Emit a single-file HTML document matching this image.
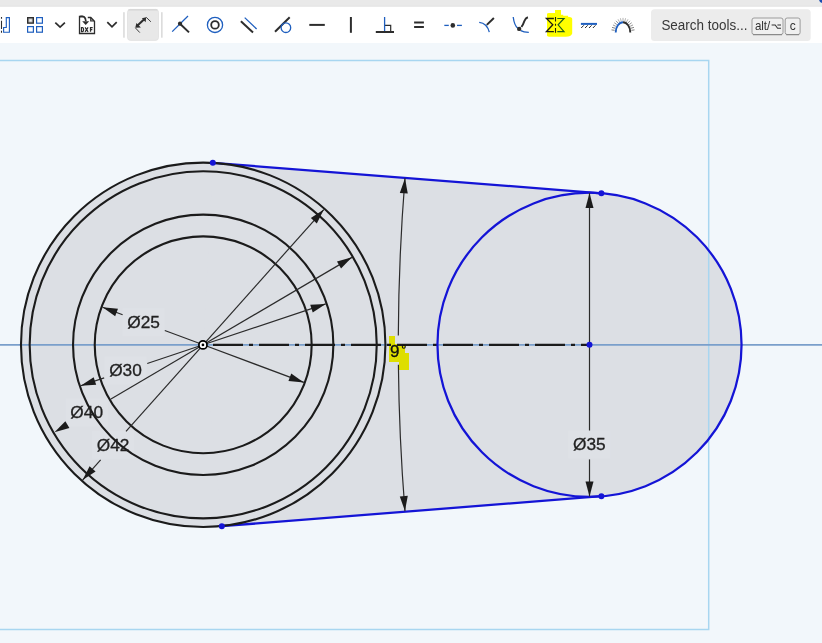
<!DOCTYPE html>
<html><head><meta charset="utf-8"><style>
html,body{margin:0;padding:0;width:822px;height:643px;overflow:hidden;background:#f2f7fb;}
svg{display:block;will-change:transform;}
</style></head><body>
<svg width="822" height="643" viewBox="0 0 822 643">
<rect x="0" y="0" width="822" height="643" fill="#f2f7fb"/>
<circle cx="203.20" cy="344.80" r="182.22" fill="#dcdfe4"/>
<circle cx="589.50" cy="344.80" r="152.05" fill="#dcdfe4"/>
<polygon points="212.80,162.80 601.40,193.30 601.40,496.20 221.80,526.20 203.20,344.80" fill="#dcdfe4"/>
<rect x="122.4" y="308.2" width="42" height="28" fill="#dee1e6"/>
<rect x="104.5" y="356.4" width="42" height="28" fill="#dee1e6"/>
<rect x="65.7" y="398.4" width="42" height="28" fill="#dee1e6"/>
<rect x="92.1" y="430.8" width="42" height="28" fill="#dee1e6"/>
<rect x="568.3" y="430.6" width="42" height="28" fill="#dee1e6"/>
<path d="M0 60.5 H708.7 V629.4 H0" fill="none" stroke="#a8d6f0" stroke-width="1.5"/>
<line x1="0" y1="344.80" x2="822" y2="344.80" stroke="#7a9fcb" stroke-width="1.7"/>
<polygon points="389,336 395,336 395,344 405,344 405,353 409,353 409,370 399,370 399,362 389,362" fill="#dede00"/>
<line x1="213" y1="344.80" x2="589.5" y2="344.80" stroke="#1b1b1b" stroke-width="2.3" stroke-dasharray="30 6 4 6"/>
<line x1="212.80" y1="162.80" x2="601.40" y2="193.30" stroke="#1414d6" stroke-width="2.25"/>
<line x1="221.80" y1="526.20" x2="601.40" y2="496.20" stroke="#1414d6" stroke-width="2.25"/>
<circle cx="203.20" cy="344.80" r="182.22" fill="none" stroke="#1b1b1b" stroke-width="2.1"/>
<circle cx="203.20" cy="344.80" r="173.54" fill="none" stroke="#1b1b1b" stroke-width="2.1"/>
<circle cx="203.20" cy="344.80" r="130.16" fill="none" stroke="#1b1b1b" stroke-width="2.1"/>
<circle cx="203.20" cy="344.80" r="108.46" fill="none" stroke="#1b1b1b" stroke-width="2.1"/>
<circle cx="589.50" cy="344.80" r="152.05" fill="none" stroke="#1414d6" stroke-width="2.25"/>
<line x1="203.20" y1="344.80" x2="303.88" y2="382.38" stroke="#2b2b2b" stroke-width="1.2"/>
<polygon points="303.88,382.38 288.43,380.88 291.22,373.39" fill="#1b1b1b"/>
<line x1="203.20" y1="344.80" x2="164.79" y2="330.46" stroke="#2b2b2b" stroke-width="1.2"/>
<line x1="122.63" y1="314.73" x2="102.52" y2="307.22" stroke="#2b2b2b" stroke-width="1.2"/>
<polygon points="102.52,307.22 117.97,308.72 115.18,316.21" fill="#1b1b1b"/>
<line x1="203.20" y1="344.80" x2="325.71" y2="303.90" stroke="#2b2b2b" stroke-width="1.2"/>
<polygon points="325.71,303.90 312.75,312.44 310.21,304.85" fill="#1b1b1b"/>
<line x1="203.20" y1="344.80" x2="147.24" y2="363.48" stroke="#2b2b2b" stroke-width="1.2"/>
<line x1="104.17" y1="377.86" x2="80.69" y2="385.70" stroke="#2b2b2b" stroke-width="1.2"/>
<polygon points="80.69,385.70 93.65,377.16 96.19,384.75" fill="#1b1b1b"/>
<line x1="203.20" y1="344.80" x2="351.95" y2="257.37" stroke="#2b2b2b" stroke-width="1.2"/>
<polygon points="351.95,257.37 341.04,268.42 336.99,261.52" fill="#1b1b1b"/>
<line x1="203.20" y1="344.80" x2="110.96" y2="399.02" stroke="#2b2b2b" stroke-width="1.2"/>
<polygon points="54.45,432.23 65.36,421.18 69.41,428.08" fill="#1b1b1b"/>
<line x1="203.20" y1="344.80" x2="323.81" y2="209.55" stroke="#2b2b2b" stroke-width="1.2"/>
<polygon points="323.81,209.55 316.81,223.41 310.84,218.08" fill="#1b1b1b"/>
<line x1="203.20" y1="344.80" x2="125.99" y2="431.38" stroke="#2b2b2b" stroke-width="1.2"/>
<line x1="100.64" y1="459.81" x2="82.59" y2="480.05" stroke="#2b2b2b" stroke-width="1.2"/>
<polygon points="82.59,480.05 89.59,466.19 95.56,471.52" fill="#1b1b1b"/>
<line x1="589.50" y1="193" x2="589.50" y2="430.5" stroke="#2b2b2b" stroke-width="1.2"/>
<line x1="589.50" y1="459.4" x2="589.50" y2="496.5" stroke="#2b2b2b" stroke-width="1.2"/>
<polygon points="589.50,193.00 593.50,208.00 585.50,208.00" fill="#1b1b1b"/>
<polygon points="589.50,496.60 585.50,481.60 593.50,481.60" fill="#1b1b1b"/>
<path d="M405.00 178.30 A2071.70 2071.70 0 0 0 398.32 335.50" fill="none" stroke="#2b2b2b" stroke-width="1.2"/>
<path d="M398.40 364.70 A2071.70 2071.70 0 0 0 404.99 511.10" fill="none" stroke="#2b2b2b" stroke-width="1.2"/>
<polygon points="405.00,178.30 407.78,193.57 399.81,192.93" fill="#1b1b1b"/>
<polygon points="404.99,511.10 399.79,496.47 407.77,495.83" fill="#1b1b1b"/>
<circle cx="212.80" cy="162.80" r="3" fill="#1414d6"/>
<circle cx="601.40" cy="193.30" r="3" fill="#1414d6"/>
<circle cx="221.80" cy="526.20" r="3" fill="#1414d6"/>
<circle cx="601.40" cy="496.20" r="3" fill="#1414d6"/>
<circle cx="589.50" cy="344.80" r="3" fill="#1414d6"/>
<circle cx="202.95" cy="344.9" r="4.05" fill="#ffffff" stroke="#000" stroke-width="1.75"/>
<circle cx="202.95" cy="344.9" r="1.35" fill="#000"/>
<text x="143.6" y="327.9" font-family="Liberation Sans, sans-serif" font-size="17.3" fill="#222" stroke="#222" stroke-width="0.3" text-anchor="middle">Ø25</text>
<text x="125.5" y="375.6" font-family="Liberation Sans, sans-serif" font-size="17.3" fill="#222" stroke="#222" stroke-width="0.3" text-anchor="middle">Ø30</text>
<text x="86.7" y="417.6" font-family="Liberation Sans, sans-serif" font-size="17.3" fill="#222" stroke="#222" stroke-width="0.3" text-anchor="middle">Ø40</text>
<text x="113.1" y="450.9" font-family="Liberation Sans, sans-serif" font-size="17.3" fill="#222" stroke="#222" stroke-width="0.3" text-anchor="middle">Ø42</text>
<text x="589.3" y="450.3" font-family="Liberation Sans, sans-serif" font-size="17.3" fill="#222" stroke="#222" stroke-width="0.3" text-anchor="middle">Ø35</text>
<text x="390" y="356.6" font-family="Liberation Sans, sans-serif" font-size="17" fill="#111" stroke="#111" stroke-width="0.35">9</text>
<circle cx="403.8" cy="346.8" r="1.5" fill="none" stroke="#111" stroke-width="1.1"/>
<rect x="0" y="0" width="822" height="7" fill="#e9e9e9"/>
<rect x="0" y="5.6" width="822" height="1.2" fill="#e4e4e4"/>
<rect x="0" y="6.8" width="822" height="36.2" fill="#ffffff"/>
<path d="M1.5 17 V18.7 M1.5 20.8 V29 M1.5 30.7 V32.7" stroke="#2d2d2d" stroke-width="1.1"/>
<path d="M3.6 27.5 H6.3 V17.6 H9.4 V32.2 H3.6 Z" fill="none" stroke="#1f5fbf" stroke-width="1.15"/>
<rect x="27.7" y="17.7" width="5.6" height="5.4" fill="#bdbdbd" stroke="#2f2f2f" stroke-width="1.4"/>
<rect x="29.4" y="19.4" width="2.2" height="2" fill="#f3f3f3"/>
<rect x="36.6" y="17.6" width="5.8" height="5.6" fill="none" stroke="#1f5fbf" stroke-width="1.2"/>
<rect x="27.6" y="26.6" width="5.8" height="5.6" fill="none" stroke="#1f5fbf" stroke-width="1.2"/>
<rect x="36.6" y="26.6" width="5.8" height="5.6" fill="none" stroke="#1f5fbf" stroke-width="1.2"/>
<path d="M55.3 22.7 L60.1 27.2 L64.9 22.7" fill="none" stroke="#2d2d2d" stroke-width="1.7"/>
<path d="M107.3 22.2 L112 26.9 L116.7 22.2" fill="none" stroke="#2d2d2d" stroke-width="1.7"/>
<path d="M82.8 16.5 H79.5 V33.5 H94.5 V21.2 L90.8 17.5 H87.8" fill="none" stroke="#2d2d2d" stroke-width="1.3"/>
<path d="M90.7 17.8 V21 H94 Z" fill="#2d2d2d" opacity="0.35"/>
<path d="M90.7 17.8 V21 H94" fill="none" stroke="#2d2d2d" stroke-width="1.1"/>
<path d="M80 16.6 Q85.5 15.2 85.8 21" fill="none" stroke="#2d2d2d" stroke-width="1.7"/>
<polygon points="82.2,21.2 89.2,21.2 85.7,24.9" fill="#2d2d2d"/>
<path d="M81.5 27.5 H82.6 Q83.6 27.5 83.6 29.6 Q83.6 31.6 82.6 31.6 H81.5 Z" fill="none" stroke="#2d2d2d" stroke-width="1.25"/>
<path d="M85.1 27.3 L88.1 31.8 M88.1 27.3 L85.1 31.8" stroke="#2d2d2d" stroke-width="1.25"/>
<path d="M92.7 27.6 H90.5 V31.8 M90.5 29.5 H92.3" fill="none" stroke="#2d2d2d" stroke-width="1.25"/>
<rect x="123.2" y="12.2" width="1.5" height="25.5" fill="#d9d9d9"/>
<rect x="161.1" y="12.2" width="1.5" height="25.5" fill="#d9d9d9"/>
<rect x="127.5" y="9.4" width="31" height="31" rx="3" fill="#e8e8e8" stroke="#e0e0e0" stroke-width="0.8"/>
<path d="M128.3 9.9 H157.5" stroke="#cfcfcf" stroke-width="1"/>
<line x1="137.5" y1="25.6" x2="144.2" y2="19.3" stroke="#2d2d2d" stroke-width="2"/>
<polygon points="135.3,27.8 136.4,23.1 140.9,27.6" fill="#2d2d2d"/>
<polygon points="146.2,17.3 141.9,18.3 145.6,22.3" fill="#2d2d2d"/>
<line x1="135.3" y1="27.8" x2="139.8" y2="32.6" stroke="#2d2d2d" stroke-width="0.9"/>
<line x1="146.2" y1="17.3" x2="150.9" y2="21.8" stroke="#2d2d2d" stroke-width="0.9"/>
<line x1="172.2" y1="31.6" x2="188" y2="16" stroke="#1f5fbf" stroke-width="1.3"/>
<line x1="180" y1="23.7" x2="189" y2="32.4" stroke="#2d2d2d" stroke-width="2"/>
<circle cx="180" cy="23.7" r="2.1" fill="#2d2d2d"/>
<circle cx="215" cy="24.9" r="7.6" fill="none" stroke="#1f5fbf" stroke-width="1.3"/>
<circle cx="215" cy="24.9" r="3.8" fill="none" stroke="#2d2d2d" stroke-width="1.8"/>
<line x1="240.9" y1="21.3" x2="253" y2="32.4" stroke="#2d2d2d" stroke-width="2"/>
<line x1="244.7" y1="17.6" x2="256.6" y2="29" stroke="#1f5fbf" stroke-width="1.3"/>
<line x1="275" y1="31.8" x2="289.7" y2="17.2" stroke="#2d2d2d" stroke-width="2"/>
<circle cx="285.9" cy="27.7" r="4.8" fill="none" stroke="#1f5fbf" stroke-width="1.3"/>
<line x1="309.3" y1="24.9" x2="324.8" y2="24.9" stroke="#2d2d2d" stroke-width="2"/>
<line x1="350.9" y1="17" x2="350.9" y2="32.8" stroke="#2d2d2d" stroke-width="2"/>
<line x1="375.8" y1="32" x2="394" y2="32" stroke="#2d2d2d" stroke-width="2"/>
<path d="M384.6 25.3 H390.7 V31" fill="none" stroke="#2d2d2d" stroke-width="1.2"/>
<line x1="384.6" y1="17" x2="384.6" y2="31" stroke="#1f5fbf" stroke-width="1.3"/>
<line x1="414.1" y1="22.5" x2="423.9" y2="22.5" stroke="#2d2d2d" stroke-width="2"/>
<line x1="414.1" y1="27" x2="423.9" y2="27" stroke="#2d2d2d" stroke-width="2"/>
<line x1="444.3" y1="25.4" x2="448.8" y2="25.4" stroke="#1f5fbf" stroke-width="1.3"/>
<line x1="457" y1="25.4" x2="461.9" y2="25.4" stroke="#1f5fbf" stroke-width="1.3"/>
<circle cx="452.8" cy="25.4" r="2.3" fill="#2d2d2d"/>
<path d="M479.2 22.3 Q487 23 489.3 32.2" fill="none" stroke="#1f5fbf" stroke-width="1.3"/>
<line x1="486.8" y1="24.9" x2="493.9" y2="18" stroke="#2d2d2d" stroke-width="2"/>
<path d="M513.2 17 Q514.3 25.5 517.8 28.3" fill="none" stroke="#1f5fbf" stroke-width="1.3"/>
<path d="M520.8 30.6 Q523.5 32.3 528.8 32.3" fill="none" stroke="#1f5fbf" stroke-width="1.3"/>
<path d="M521.4 27 Q523.2 24.6 524.4 21 Q525.6 17.9 527.9 17.2" fill="none" stroke="#2d2d2d" stroke-width="2"/>
<circle cx="519.2" cy="28.9" r="2.2" fill="#2d2d2d"/>
<path d="M555 10 H561 V14.7 H563.2 V15.8 H568 V16.8 Q572.2 17 572.2 19 V33.5 Q571 36.7 565.8 36.7 H549 Q547 36.7 547 35.6 V14 Q547 12.9 549 12.9 H555 Z" fill="#ffff00"/>
<path d="M553.9 18.5 H546.4 L552.8 24.8 L546.4 31.7 H553.9" fill="none" stroke="#1e1e10" stroke-width="1.3"/>
<path d="M557.3 18.5 H564 L558.1 24.8 L564 31.7 H557.3" fill="none" stroke="#1f5f1a" stroke-width="1.2"/>
<path d="M555.5 17.1 V21.6 M555.5 23.7 V25.8 M555.5 28 V32.7" stroke="#1e1e10" stroke-width="1.1"/>
<line x1="580.9" y1="23.9" x2="597" y2="23.9" stroke="#1f5fbf" stroke-width="2"/>
<line x1="583.8000000000001" y1="25.3" x2="581.2" y2="28" stroke="#2d2d2d" stroke-width="1"/>
<line x1="587.7" y1="25.3" x2="585.1" y2="28" stroke="#2d2d2d" stroke-width="1"/>
<line x1="591.6" y1="25.3" x2="589.0" y2="28" stroke="#2d2d2d" stroke-width="1"/>
<line x1="595.5" y1="25.3" x2="592.9" y2="28" stroke="#2d2d2d" stroke-width="1"/>
<line x1="614.65" y1="30.34" x2="611.48" y2="29.89" stroke="#555" stroke-width="0.75"/>
<line x1="615.11" y1="28.26" x2="612.04" y2="27.35" stroke="#555" stroke-width="0.75"/>
<line x1="615.85" y1="26.32" x2="612.96" y2="24.93" stroke="#777" stroke-width="0.75"/>
<line x1="616.86" y1="24.59" x2="614.26" y2="22.73" stroke="#777" stroke-width="0.75"/>
<line x1="618.13" y1="23.14" x2="615.94" y2="20.80" stroke="#777" stroke-width="0.75"/>
<line x1="619.61" y1="22.04" x2="618.00" y2="19.27" stroke="#9a9a9a" stroke-width="0.75"/>
<line x1="621.25" y1="21.34" x2="620.40" y2="18.26" stroke="#9a9a9a" stroke-width="0.75"/>
<line x1="623.00" y1="21.10" x2="623.00" y2="17.90" stroke="#9a9a9a" stroke-width="0.75"/>
<line x1="624.75" y1="21.34" x2="625.60" y2="18.26" stroke="#9a9a9a" stroke-width="0.75"/>
<line x1="626.39" y1="22.04" x2="628.00" y2="19.27" stroke="#9a9a9a" stroke-width="0.75"/>
<line x1="627.87" y1="23.14" x2="630.06" y2="20.80" stroke="#777" stroke-width="0.75"/>
<line x1="629.14" y1="24.59" x2="631.74" y2="22.73" stroke="#777" stroke-width="0.75"/>
<line x1="630.15" y1="26.32" x2="633.04" y2="24.93" stroke="#777" stroke-width="0.75"/>
<line x1="630.89" y1="28.26" x2="633.96" y2="27.35" stroke="#555" stroke-width="0.75"/>
<line x1="631.35" y1="30.34" x2="634.52" y2="29.89" stroke="#555" stroke-width="0.75"/>
<path d="M615.7 32.5 A7.3 10.2 0 0 1 623 22.3" fill="none" stroke="#1f5fbf" stroke-width="1.9"/>
<path d="M623 22.3 A7.3 10.2 0 0 1 630.3 32.5" fill="none" stroke="#2d2d2d" stroke-width="1.9"/>
<rect x="651" y="9.3" width="159.7" height="31.7" rx="3.5" fill="#ececec"/>
<text x="661.4" y="30" font-family="Liberation Sans, sans-serif" font-size="15.3" fill="#383838" textLength="86" lengthAdjust="spacingAndGlyphs">Search tools...</text>
<rect x="752" y="18" width="31" height="16.5" rx="2" fill="#f0f0f0" stroke="#9c9c9c" stroke-width="1"/>
<rect x="785.2" y="18" width="14.9" height="16.5" rx="2" fill="#f0f0f0" stroke="#9c9c9c" stroke-width="1"/>
<path d="M753 34.6 H782 M786.2 34.6 H799.1" stroke="#8a8a8a" stroke-width="1.3"/>
<text x="754.9" y="30.4" font-family="Liberation Sans, sans-serif" font-size="12.2" fill="#333" textLength="15.4" lengthAdjust="spacingAndGlyphs">alt/</text>
<path d="M771.6 25 H775.2 L777.6 28.3 H781 M777.4 25 H781" fill="none" stroke="#333" stroke-width="1.05"/>
<text x="792.7" y="30.4" font-family="Liberation Sans, sans-serif" font-size="12" fill="#333" text-anchor="middle">c</text>
<circle cx="823" cy="-1" r="4" fill="#1b4cb0"/>
</svg>
</body></html>
